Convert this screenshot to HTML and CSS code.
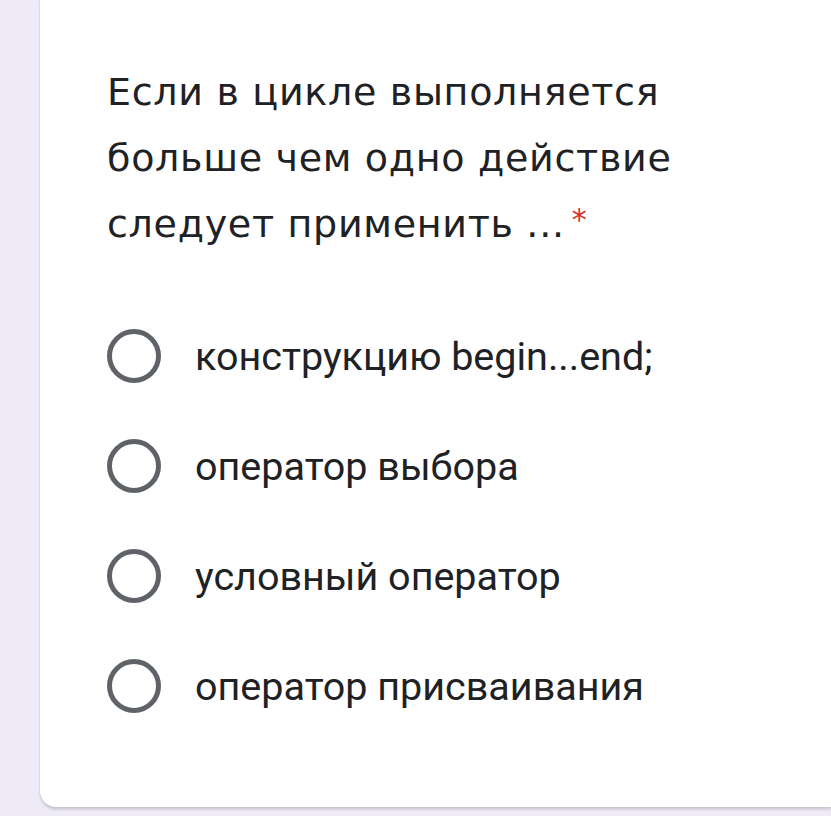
FILE: index.html
```html
<!DOCTYPE html>
<html lang="ru">
<head>
<meta charset="utf-8">
<link rel="stylesheet" href="styles.css">
</head>
<body>
<div class="page">
  <div class="card">
    <div class="title">Если в цикле выполняется больше чем одно действие следует применить ...<span class="req">*</span></div>
    <div class="options">
      <div class="option"><span class="radio"></span><span class="label">конструкцию begin...end;</span></div>
      <div class="option"><span class="radio"></span><span class="label">оператор выбора</span></div>
      <div class="option"><span class="radio"></span><span class="label">условный оператор</span></div>
      <div class="option"><span class="radio"></span><span class="label">оператор присваивания</span></div>
    </div>
  </div>
</div>
</body>
</html>
```

FILE: styles.css
```css
html, body {
  margin: 0;
  padding: 0;
  background: #eeeaf8;
  width: 831px;
  height: 816px;
  overflow: hidden;
}
.page {
  padding-left: 40px;
  margin-top: -14px;
}
.card {
  background: #ffffff;
  border-radius: 16px 0 0 16px;
  box-shadow: 0 3px 2px rgba(60, 64, 67, 0.16), 0 0 0 1px rgba(60,64,67,0.05);
  padding: 73px 0 66px 67px;
}
.title {
  font-family: "DejaVu Sans", sans-serif;
  font-size: 38px;
  letter-spacing: 0.7px;
  line-height: 66px;
  height: 198px;
  color: #202124;
  width: 640px;
}
.req {
  color: #d93025;
  margin-left: 7px;
  font-size: 30px;
  line-height: 0;
  vertical-align: 7px;
}
.options {
  margin-top: 44px;
  display: flex;
  flex-direction: column;
}
.option {
  height: 110px;
  display: flex;
  align-items: center;
}
.radio {
  width: 44px;
  height: 44px;
  border: 5px solid #5f6368;
  border-radius: 50%;
  flex: none;
}
.label {
  margin-left: 34px;
  font-family: Roboto, sans-serif;
  font-size: 39.5px;
  color: #202124;
}
```
